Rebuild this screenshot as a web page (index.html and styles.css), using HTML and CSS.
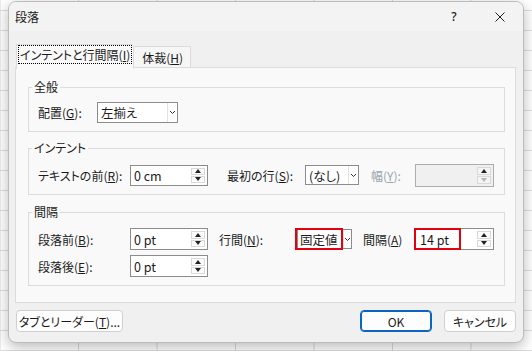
FILE: index.html
```html
<!DOCTYPE html>
<html lang="ja">
<head>
    <meta charset="UTF-8">
    <title>段落</title>
    <link rel="stylesheet" href="styles.css">
</head>
<body>
    <div class="dialog">
        <!-- Title bar -->
        <div class="titlebar">
            <span class="title">段落</span>
            <span class="caption-btn help">?</span>
            <span class="caption-btn close">
                <svg width="10" height="10" viewBox="0 0 10 10"><path d="M0.5 0.5 L9.5 9.5 M9.5 0.5 L0.5 9.5" stroke="#1f1f1f" stroke-width="1" fill="none"/></svg>
            </span>
        </div>

        <div class="body">
            <!-- Tabs -->
            <div class="tabs">
                <div class="tab active"><span class="focus">インテントと行間隔(<u>I</u>)</span></div>
                <div class="tab">体裁(<u>H</u>)</div>
            </div>

            <div class="panel">
                <fieldset class="group g1">
                    <legend>全般</legend>
                    <div class="row">
                        <span class="lbl w59">配置(<u>G</u>):</span>
                        <div class="select w81 h21">
                            <span class="val">左揃え</span>
                            <span class="arrow"><svg width="5" height="3" viewBox="0 0 5 3"><path d="M0 0 L2.5 2.5 L5 0" stroke="#333" fill="none"/></svg></span>
                        </div>
                    </div>
                </fieldset>

                <fieldset class="group g2">
                    <legend>インテント</legend>
                    <div class="row">
                        <span class="lbl w92">テキストの前(<u>R</u>):</span>
                        <div class="spin w78 h21">
                            <span class="val">0 cm</span>
                            <span class="spin-btns"><span class="up"></span><span class="down"></span></span>
                        </div>
                        <span class="lbl w78 ml19">最初の行(<u>S</u>):</span>
                        <div class="select w54 h20">
                            <span class="val">(なし)</span>
                            <span class="arrow"><svg width="5" height="3" viewBox="0 0 5 3"><path d="M0 0 L2.5 2.5 L5 0" stroke="#333" fill="none"/></svg></span>
                        </div>
                        <span class="lbl w44 ml12 disabled">幅(<u>Y</u>):</span>
                        <div class="spin w79 h23 off">
                            <span class="val"></span>
                            <span class="spin-btns"><span class="up"></span><span class="down"></span></span>
                        </div>
                    </div>
                </fieldset>

                <fieldset class="group g3">
                    <legend>間隔</legend>
                    <div class="row">
                        <span class="lbl w92">段落前(<u>B</u>):</span>
                        <div class="spin w78 h22">
                            <span class="val">0 pt</span>
                            <span class="spin-btns"><span class="up"></span><span class="down"></span></span>
                        </div>
                        <span class="lbl w76 ml11">行間(<u>N</u>):</span>
                        <div class="select w55 h20 ml2">
                            <span class="val mark mark-select">固定値</span>
                            <span class="arrow"><svg width="5" height="3" viewBox="0 0 5 3"><path d="M0 0 L2.5 2.5 L5 0" stroke="#333" fill="none"/></svg></span>
                        </div>
                        <span class="lbl w51 ml11">間隔(<u>A</u>)</span>
                        <div class="spin w80 h22">
                            <span class="val mark mark-spin">14 pt</span>
                            <span class="fill"></span>
                            <span class="spin-btns"><span class="up"></span><span class="down"></span></span>
                        </div>
                    </div>
                    <div class="row row2">
                        <span class="lbl w92">段落後(<u>E</u>):</span>
                        <div class="spin w78 h22">
                            <span class="val">0 pt</span>
                            <span class="spin-btns"><span class="up"></span><span class="down"></span></span>
                        </div>
                    </div>
                </fieldset>
            </div>

            <!-- Buttons -->
            <div class="footer">
                <button class="btn tabs-btn">タブとリーダー(<u>T</u>)...</button>
                <span class="fill"></span>
                <button class="btn ok">OK</button>
                <button class="btn">キャンセル</button>
            </div>
        </div>
    </div>
</body>
</html>
```

FILE: styles.css
```css
html, body {
    margin: 0;
    padding: 0;
}

body {
    width: 532px;
    height: 351px;
    overflow: hidden;
    font-family: "Noto Sans CJK JP", "Noto Sans", sans-serif;
    font-size: 12px;
    font-feature-settings: "palt";
    color: #1b1b1b;
    background-color: #ffffff;
    background-image:
        linear-gradient(to right, #d8d8d8 1px, transparent 1px),
        linear-gradient(to bottom, #dedede 1px, transparent 1px);
    background-size: 78.5px 20px;
    background-position: -0.5px 10px;
    padding-top: 1px;
    box-sizing: border-box;
}

.dialog {
    width: 516px;
    height: 342px;
    margin-left: 8px;
    box-sizing: border-box;
    background-color: #f0f0f0;
    border: 1px solid #bcbcbc;
    border-radius: 8px;
    box-shadow: 0 4px 14px rgba(0, 0, 0, 0.28);
    overflow: hidden;
    display: flex;
    flex-direction: column;
}

/* Title bar */
.titlebar {
    height: 29px;
    background-color: #f3f3f3;
    display: flex;
    align-items: center;
    flex-shrink: 0;
}

.title {
    padding-left: 6px;
    flex: 1;
    color: #202020;
}

.caption-btn {
    width: 46px;
    height: 29px;
    display: flex;
    align-items: center;
    justify-content: center;
}

.help {
    font-family: "Noto Sans", sans-serif;
    font-size: 12px;
    font-weight: 500;
}

.body {
    flex: 1;
    padding: 13px 7px 0 6px;
    display: flex;
    flex-direction: column;
}

/* Tabs */
.tabs {
    display: flex;
    height: 24px;
    align-items: flex-start;
    margin-left: 1px;
}

.tab {
    height: 20px;
    margin-top: 2px;
    padding: 0 7px 0 8px;
    display: flex;
    align-items: center;
    background-color: #f6f6f6;
    border: 1px solid #dcdcdc;
    border-bottom: none;
}

.tab.active {
    height: 24px;
    margin-top: 0;
    padding: 0 2px;
    align-items: flex-start;
    background-color: #f9f9f9;
    border-right: none;
    position: relative;
    z-index: 1;
}

.focus {
    margin-top: 1px;
    padding: 0 1px;
    height: 17px;
    line-height: 17px;
    outline: 1px dotted #000;
    outline-offset: 0;
}

.panel {
    height: 236px;
    box-sizing: border-box;
    background-color: #f9f9f9;
    border: 1px solid #dcdcdc;
    margin-top: -1px;
    padding: 11px 10px 0 12px;
}

/* Groups */
.group {
    margin: 0;
    min-width: 0;
    border: 1px solid #dcdcdc;
    padding: 8px 0 8px 3px;
}

.group legend {
    padding: 0 2px;
    line-height: 16px;
}

.g1 {
    padding-top: 7px;
    padding-bottom: 9px;
}

.g2 {
    margin-top: 8px;
}

.g3 {
    margin-top: 9px;
}

.row {
    display: flex;
    align-items: center;
    height: 22px;
    padding-left: 6px;
}

.g1 .row {
    height: 20px;
}

.row2 {
    margin-top: 5px;
}

.lbl {
    flex-shrink: 0;
    white-space: nowrap;
}

.lbl.disabled {
    color: #9aa3ad;
}

.w44 { width: 44px; }
.w51 { width: 51px; }
.w54 { width: 54px; }
.w55 { width: 55px; }
.w59 { width: 59px; }
.w76 { width: 76px; }
.w78 { width: 78px; }
.w79 { width: 79px; }
.w80 { width: 80px; }
.w81 { width: 81px; }
.w92 { width: 92px; }
.h20 { height: 20px; }
.h21 { height: 21px; }
.h22 { height: 22px; }
.h23 { height: 23px; }
.ml2 { margin-left: 2px; }
.ml11 { margin-left: 11px; }
.ml12 { margin-left: 12px; }
.ml19 { margin-left: 19px; }

/* Select & spin boxes */
.select,
.spin {
    flex-shrink: 0;
    box-sizing: border-box;
    display: flex;
    align-items: stretch;
    background-color: #fff;
    border: 1px solid #8c8c8c;
}

.val {
    flex: 1;
    display: flex;
    align-items: center;
    padding-left: 3px;
    white-space: nowrap;
    font-size: 12.5px;
}

.arrow {
    width: 9px;
    border-left: 1px solid #e2e2e2;
    display: flex;
    align-items: center;
    justify-content: center;
}

.spin-btns {
    width: 14px;
    margin: 2px 2px 2px 0;
    display: flex;
    flex-direction: column;
    gap: 1px;
}

.spin-btns span {
    flex: 1;
    border: 1px solid #d9d9d9;
    background-color: #fcfcfc;
    display: flex;
    align-items: center;
    justify-content: center;
}

.spin-btns .up::after {
    content: "";
    border-left: 3px solid transparent;
    border-right: 3px solid transparent;
    border-bottom: 4px solid #222;
}

.spin-btns .down::after {
    content: "";
    border-left: 3px solid transparent;
    border-right: 3px solid transparent;
    border-top: 4px solid #222;
}

.spin.off {
    background-color: #f0f0f0;
    border-color: #adadad;
}

.spin.off .spin-btns span {
    background-color: #f4f4f4;
}

.spin.off .down::after {
    border-top-color: #b5b5b5;
}

/* Red highlight boxes */
.mark {
    flex: none;
    box-sizing: border-box;
    border: 2px solid #e3000f;
}

.mark-select {
    width: 48px;
    margin: -2px 0 -2px -3px;
    padding-left: 3px;
}

.mark-spin {
    width: 47px;
    margin: -1px 0 -1px -1px;
    padding-left: 4px;
}

.fill {
    flex: 1;
}

/* Footer buttons */
.footer {
    display: flex;
    margin-top: 7px;
    gap: 12px;
}

.btn {
    height: 22px;
    width: 72px;
    padding: 0;
    font-family: inherit;
    font-size: 12px;
    font-feature-settings: "palt";
    color: #1b1b1b;
    background-color: #fdfdfd;
    border: 1px solid #d0d0d0;
    border-radius: 4px;
}

.tabs-btn {
    width: 107px;
    margin-left: 1px;
}

.ok {
    border-color: #0a64c0;
    box-shadow: inset 0 0 0 1px #0a64c0;
}
```
